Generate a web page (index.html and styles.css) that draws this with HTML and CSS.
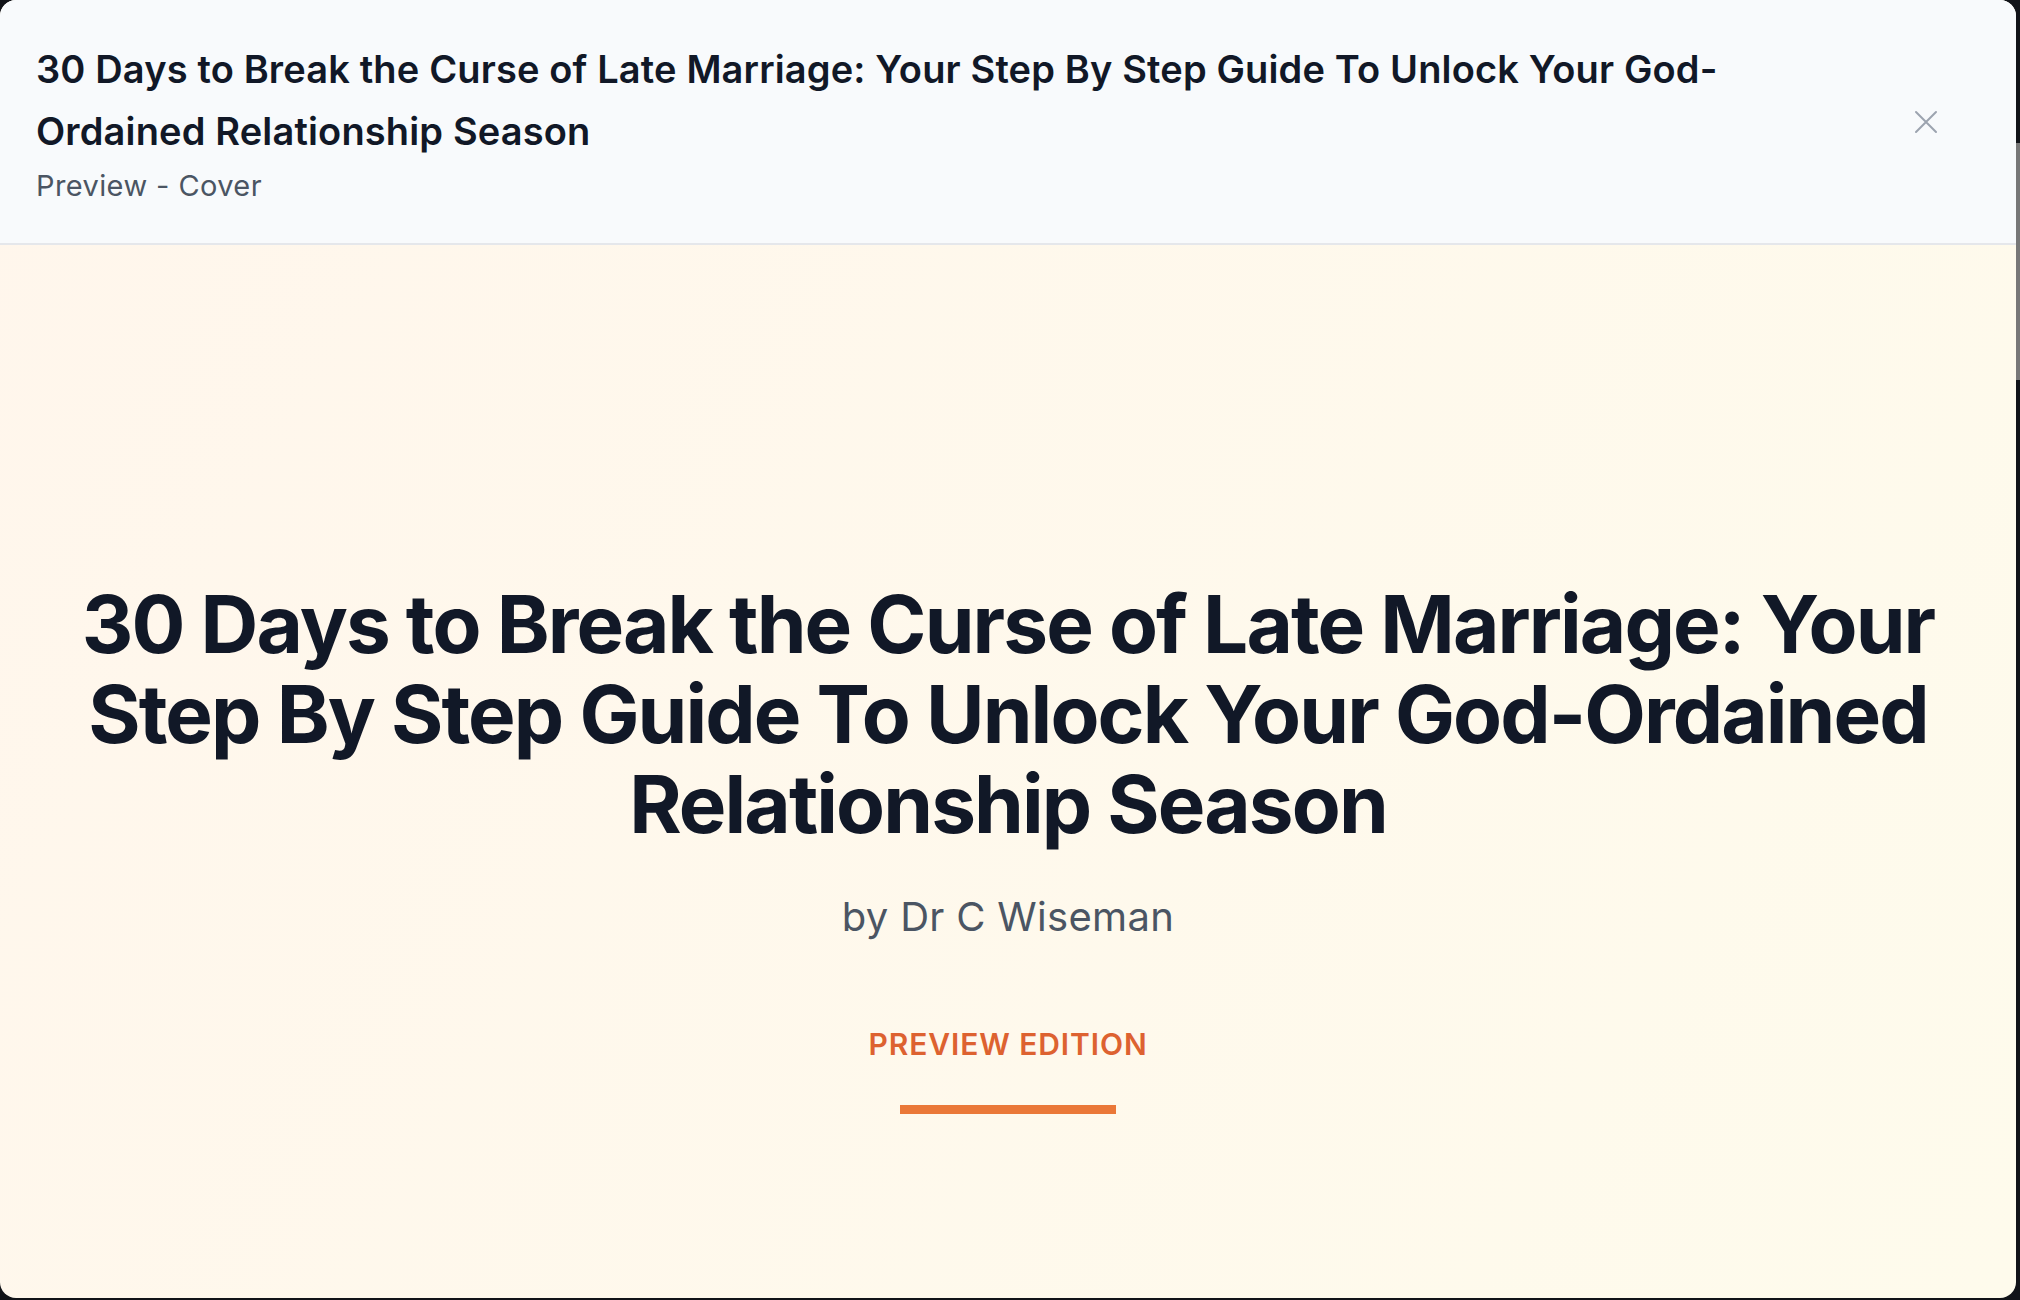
FILE: index.html
```html
<!DOCTYPE html>
<html lang="en">
<head>
<meta charset="utf-8">
<title>Preview - Cover</title>
<link rel="stylesheet" href="styles.css">
</head>
<body>
<div class="backdrop">
  <div class="modal">
    <header class="modal-header">
      <div class="header-text">
        <h2 class="header-title">30 Days to Break the Curse of Late Marriage: Your Step By Step Guide To Unlock Your God-Ordained Relationship Season</h2>
        <p class="header-sub">Preview - Cover</p>
      </div>
      <button class="close-btn" aria-label="Close">
        <svg width="24" height="24" viewBox="0 0 24 24" fill="none" stroke="currentColor" stroke-width="2" stroke-linecap="round"><path d="M2 2L22 22M22 2L2 22"/></svg>
      </button>
    </header>
    <main class="cover">
      <h1 class="cover-title">30 Days to Break the Curse of Late Marriage: Your Step By Step Guide To Unlock Your God-Ordained Relationship Season</h1>
      <p class="cover-author">by Dr C Wiseman</p>
      <p class="cover-edition">PREVIEW EDITION</p>
      <div class="cover-bar"></div>
    </main>
  </div>
  <div class="scroll-thumb"></div>
</div>
</body>
</html>
```
FILE: styles.css
```css
* { box-sizing: border-box; }
html, body { margin: 0; padding: 0; }
body {
  background: #111318;
  font-family: Inter, "Noto Sans", "Liberation Sans", sans-serif;
  width: 2020px;
  height: 1300px;
  overflow: hidden;
}
.backdrop {
  position: relative;
  width: 2020px;
  height: 1300px;
}
.modal {
  width: 2016px;
  height: 1298px;
  border-radius: 16px;
  overflow: hidden;
  display: flex;
  flex-direction: column;
  background: linear-gradient(120deg, #fff6ec 0%, #fefbec 100%);
}
.modal-header {
  flex: 0 0 245px;
  background: #f8fafc;
  border-bottom: 2px solid #e5e7eb;
  display: flex;
  align-items: center;
  justify-content: space-between;
  padding: 0 78px 0 36px;
}
.header-text { max-width: 1760px; }
.header-title {
  margin: 0;
  font-size: 38px;
  line-height: 62px;
  font-weight: 600;
  color: #111827;
  letter-spacing: 0.15px;
}
.header-sub {
  margin: 4px 0 0;
  font-size: 29px;
  line-height: 40px;
  color: #4b5563;
  font-weight: 400;
  letter-spacing: 0.4px;
}
.close-btn {
  border: 0;
  background: none;
  padding: 0;
  color: #9ca3af;
  width: 24px;
  height: 24px;
  display: flex;
}
.cover {
  flex: 1;
  display: flex;
  flex-direction: column;
  align-items: center;
  padding: 334px 40px 0;
  text-align: center;
}
.cover-title {
  margin: 0;
  font-size: 80px;
  line-height: 90px;
  font-weight: 700;
  color: #111827;
  letter-spacing: -1.9px;
  max-width: 1900px;
}
.cover-author {
  margin: 38px 0 0;
  font-size: 40px;
  line-height: 60px;
  color: #4b5563;
  letter-spacing: 0.3px;
}
.cover-edition {
  margin: 75px 0 0;
  font-size: 30px;
  line-height: 45px;
  font-weight: 600;
  color: #dd6230;
  letter-spacing: 0.9px;
}
.cover-bar {
  margin-top: 38px;
  width: 216px;
  height: 9px;
  background: #ea7838;
}
.scroll-thumb {
  position: absolute;
  left: 2016px;
  top: 143px;
  width: 4px;
  height: 237px;
  background: #777;
}
```
